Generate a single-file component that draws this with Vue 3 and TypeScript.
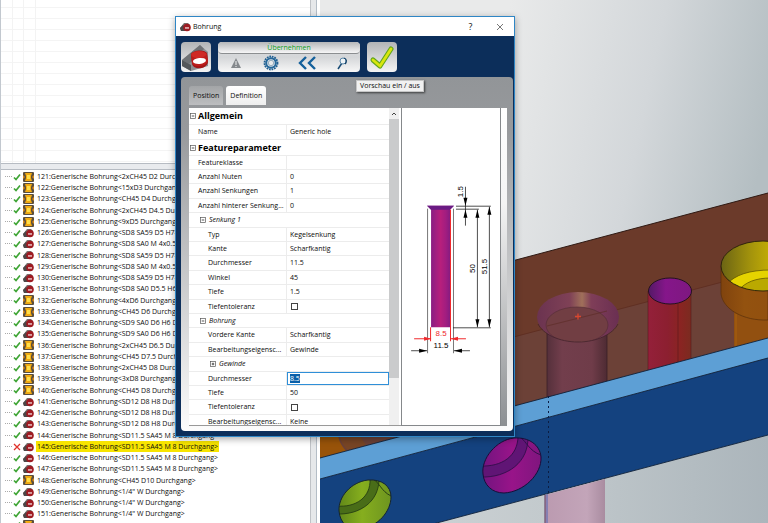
<script setup lang="ts">
import { onMounted, ref } from 'vue'

type FeatureKind = 'pocket' | 'drill'
interface FeatureNode { id: number; spec: string; kind: FeatureKind; failed?: boolean }
interface PropertyRow {
  label: string
  value?: string
  level: number
  style: 'section' | 'group' | 'text' | 'check' | 'edit'
  open?: boolean
}

const node = (id: number, kind: FeatureKind, spec: string, failed = false): FeatureNode => ({ id, kind, spec, failed })

const features: FeatureNode[] = [
  node(121, 'pocket', '2xCH45 D2 Durchgang'),
  node(122, 'pocket', '15xD3 Durchgang'),
  node(123, 'pocket', 'CH45 D4 Durchgang'),
  node(124, 'pocket', '2xCH45 D4.5 Durchgang'),
  node(125, 'pocket', '9xD5 Durchgang'),
  node(126, 'drill', 'SD8 SA59 D5 H7'),
  node(127, 'drill', 'SD8 SA0 M 4x0.5'),
  node(128, 'drill', 'SD8 SA59 D5 H7'),
  node(129, 'drill', 'SD8 SA0 M 4x0.5'),
  node(130, 'drill', 'SD8 SA59 D5 H7'),
  node(131, 'drill', 'SD8 SA0 D5.5 H6'),
  node(132, 'pocket', '4xD6 Durchgang'),
  node(133, 'pocket', 'CH45 D6 Durchgang'),
  node(134, 'drill', 'SD9 SA0 D6 H6 D'),
  node(135, 'drill', 'SD9 SA0 D6 H6 D'),
  node(136, 'pocket', '2xCH45 D6.5 Durchgang'),
  node(137, 'pocket', 'CH45 D7.5 Durchgang'),
  node(138, 'pocket', '2xCH45 D8 Durchgang'),
  node(139, 'pocket', '3xD8 Durchgang'),
  node(140, 'pocket', 'CH45 D8 Durchgang'),
  node(141, 'drill', 'SD12 D8 H8 Durchgang'),
  node(142, 'drill', 'SD12 D8 H8 Durchgang'),
  node(143, 'drill', 'SD12 D8 H8 Durchgang'),
  node(144, 'drill', 'SD11.5 SA45 M 8 Durchgang'),
  node(145, 'drill', 'SD11.5 SA45 M 8 Durchgang', true),
  node(146, 'drill', 'SD11.5 SA45 M 8 Durchgang'),
  node(147, 'drill', 'SD11.5 SA45 M 8 Durchgang'),
  node(148, 'pocket', 'CH45 D10 Durchgang'),
  node(149, 'drill', '1/4" W Durchgang'),
  node(150, 'drill', '1/4" W Durchgang'),
  node(151, 'drill', '1/4" W Durchgang'),
  node(152, 'pocket', 'CH45 D10 Durchgang'),
]

const properties: PropertyRow[] = [
  { label: 'Allgemein', level: 0, style: 'section', open: true },
  { label: 'Name', value: 'Generic hole', level: 1, style: 'text' },
  { label: 'Featureparameter', level: 0, style: 'section', open: true },
  { label: 'Featureklasse', value: '', level: 1, style: 'text' },
  { label: 'Anzahl Nuten', value: '0', level: 1, style: 'text' },
  { label: 'Anzahl Senkungen', value: '1', level: 1, style: 'text' },
  { label: 'Anzahl hinterer Senkung...', value: '0', level: 1, style: 'text' },
  { label: 'Senkung 1', level: 1, style: 'group', open: true },
  { label: 'Typ', value: 'Kegelsenkung', level: 2, style: 'text' },
  { label: 'Kante', value: 'Scharfkantig', level: 2, style: 'text' },
  { label: 'Durchmesser', value: '11.5', level: 2, style: 'text' },
  { label: 'Winkel', value: '45', level: 2, style: 'text' },
  { label: 'Tiefe', value: '1.5', level: 2, style: 'text' },
  { label: 'Tiefentoleranz', level: 2, style: 'check' },
  { label: 'Bohrung', level: 1, style: 'group', open: true },
  { label: 'Vordere Kante', value: 'Scharfkantig', level: 2, style: 'text' },
  { label: 'Bearbeitungseigensc...', value: 'Gewinde', level: 2, style: 'text' },
  { label: 'Gewinde', level: 2, style: 'group', open: false },
  { label: 'Durchmesser', value: '8.5', level: 2, style: 'edit' },
  { label: 'Tiefe', value: '50', level: 2, style: 'text' },
  { label: 'Tiefentoleranz', level: 2, style: 'check' },
  { label: 'Bearbeitungseigensc...', value: 'Keine', level: 2, style: 'text' },
]

const diameter = ref('8.5')

onMounted(() => {
  const field = document.querySelector<HTMLInputElement>('.edit-field')
  field?.focus({ preventScroll: true })
  field?.select()
})
</script>

<template>
  <main class="workspace">
    <svg class="defs" aria-hidden="true">
      <symbol id="ico-drill" viewBox="0 0 30 30">
        <path d="M1 18L19 3l8 7v14L10 29l-9-5z" fill="#8d9093" />
        <path d="M1 18L19 3l4 4L8 22z" fill="#6f7275" />
        <path d="M1 18l9 5v6l-9-5z" fill="#54575a" />
        <path d="M10 12c2-4 13-5 16-1l1 9c-1 7-14 9-16 2z" fill="#a31516" />
        <ellipse cx="18" cy="13" rx="8" ry="4" fill="#cf2a25" />
        <path d="M10 13l1 8c2 5 14 4 16-2l-1-7c-3 5-13 6-16 1z" fill="#bb1d1b" />
        <ellipse cx="18.500" cy="19" rx="6.500" ry="3" fill="#fff" transform="rotate(-6 18 19)" />
      </symbol>
      <symbol id="ico-drill-small" viewBox="0 0 11 10">
        <path d="M0 6l4-5h4l2 2v5L7 9H1z" fill="#77716f" />
        <path d="M0 6l3-3 2 2v4H1z" fill="#4c4747" />
        <ellipse cx="7" cy="5.500" rx="3.800" ry="3.800" fill="#9e1b22" />
        <path d="M5 5.300h4v1.300H5z" fill="#f3dcdc" />
      </symbol>
      <symbol id="ico-pocket" viewBox="0 0 11 10">
        <rect width="11" height="10" rx="1" fill="#5c4f3c" />
        <path d="M2 1h7L8 4v2l1 3H2l1-3V4z" fill="#f2ab12" />
        <path d="M4 3h3v4H4z" fill="#ffdf4a" />
        <path d="M0 3l2 2-2 2zM11 3L9 5l2 2z" fill="#d98a1c" />
      </symbol>
    </svg>

    <section class="side">
      <div class="sketch"></div>
      <div class="splitter"></div>
      <ul class="tree">
        <li v-for="f in features" :key="f.id" :class="{ failed: f.failed }">
          <i class="branch"></i>
          <svg class="state" viewBox="0 0 8 8">
            <path v-if="f.failed" d="M1 1l6 6M7 1L1 7" stroke="#e0322c" stroke-width="1.300" fill="none" />
            <path v-else d="M1 4.500l2 2L7 1.500" stroke="#3fa535" stroke-width="1.700" fill="none" />
          </svg>
          <svg class="kind"><use :href="f.kind === 'drill' ? '#ico-drill-small' : '#ico-pocket'" /></svg>
          <span class="caption">{{ f.id }}:Generische Bohrung&lt;{{ f.spec }}&gt;</span>
        </li>
      </ul>
    </section>
    <div class="v-splitter"></div>

    <svg class="scene" viewBox="320 0 448 523" preserveAspectRatio="xMinYMin slice" role="img" aria-label="3D-Ansicht">
      <defs>
        <linearGradient id="sky" x1="0.4" y1="0.1" x2="1" y2="0.250">
          <stop offset="0" stop-color="#e9eaea" /><stop offset="0.550" stop-color="#d3d7da" /><stop offset="1" stop-color="#b4bec2" />
        </linearGradient>
        <linearGradient id="floor" x1="0" x2="1"><stop offset="0" stop-color="#d3d7d9" /><stop offset="0.500" stop-color="#c3cacd" /><stop offset="1" stop-color="#abb5bb" /></linearGradient>
        <linearGradient id="cone" x1="0" x2="1">
          <stop offset="0" stop-color="#6b3350" /><stop offset="0.400" stop-color="#7f4156" /><stop offset="0.550" stop-color="#a0705a" /><stop offset="0.660" stop-color="#7f3e58" /><stop offset="1" stop-color="#6a2f52" />
        </linearGradient>
        <linearGradient id="shaft" x1="0" x2="1">
          <stop offset="0" stop-color="#55303b" /><stop offset="0.250" stop-color="#723e4c" /><stop offset="0.750" stop-color="#6f3c49" /><stop offset="1" stop-color="#4e2b33" />
        </linearGradient>
        <linearGradient id="pinkShaft" x1="0" x2="1"><stop offset="0" stop-color="#bb9ab0" /><stop offset="0.700" stop-color="#c3a5b9" /><stop offset="1" stop-color="#a98ca0" /></linearGradient>
        <linearGradient id="redShaft" x1="0" x2="1"><stop offset="0" stop-color="#94203a" /><stop offset="0.450" stop-color="#8c1f30" /><stop offset="0.750" stop-color="#8a2422" /><stop offset="1" stop-color="#7b2b20" /></linearGradient>
        <linearGradient id="violet" x1="0" x2="1"><stop offset="0" stop-color="#541966" /><stop offset="0.400" stop-color="#85168a" /><stop offset="1" stop-color="#7e1880" /></linearGradient>
        <linearGradient id="gold" x1="0" x2="1"><stop offset="0" stop-color="#6b6414" /><stop offset="0.350" stop-color="#a3930c" /><stop offset="0.600" stop-color="#c4ae05" /><stop offset="1" stop-color="#cdb500" /></linearGradient>
        <linearGradient id="rust" x1="0" x2="1"><stop offset="0" stop-color="#80430e" /><stop offset="0.500" stop-color="#93520f" /><stop offset="1" stop-color="#92500f" /></linearGradient>
        <linearGradient id="magenta" x1="0" x2="1"><stop offset="0" stop-color="#6f147e" /><stop offset="0.500" stop-color="#981489" /><stop offset="1" stop-color="#7d167d" /></linearGradient>
        <linearGradient id="lime" x1="0" x2="1"><stop offset="0" stop-color="#5d8418" /><stop offset="0.450" stop-color="#86ae1e" /><stop offset="1" stop-color="#6b9220" /></linearGradient>
        <clipPath id="coneClip"><ellipse cx="578" cy="317" rx="41" ry="25" /></clipPath>
        <clipPath id="bowlClip"><ellipse cx="763" cy="266" rx="42" ry="25" /></clipPath>
        <clipPath id="violetClip"><path d="M483 474c-2-15 13-34 31-36 15-1 26 7 27 19 1 17-17 35-37 36-12 0-20-8-21-19z" /></clipPath>
        <clipPath id="limeClip"><path d="M339 511c-1-14 12-29 29-31 14-1 23 6 23 17 0 14-13 30-31 32-12 1-20-6-21-18z" /></clipPath>
      </defs>
      <rect x="320" y="0" width="448" height="523" fill="url(#sky)" />
      <path d="M320 523h448v-90L320 555z" fill="url(#floor)" />
      <path d="M320 312L768 193v146L320 458z" fill="#6b3a2a" />
      <path d="M320 388L768 270v69L320 458z" fill="#6c4137" />
      <path d="M320 388L768 270" stroke="#5d2c20" stroke-width="0.800" />
      <path d="M320 312L768 193" stroke="#2f1a14" />
      <path d="M320 425h24l-6 10c1 8 5 12 8 16l-26 7z" fill="#985309" />
      <path d="M340 425c-3 10 2 20 8 25l18-5-14-20z" fill="#784525" />

      <path d="M547 325v75l60-16v-59z" fill="url(#shaft)" />
      <path d="M547 325v73M607 325v57" stroke="#3a2026" stroke-width="0.800" />
      <ellipse cx="578" cy="317" rx="41" ry="25" fill="url(#cone)" />
      <g clip-path="url(#coneClip)">
        <ellipse cx="577" cy="325" rx="31" ry="18" fill="#713e43" stroke="#542d37" stroke-width="0.600" />
        <path d="M547 326L607 311" stroke="#5d2c28" stroke-width="0.700" />
      </g>
      <path d="M538 324c5 10 21 18 40 18s35-8 40-18" fill="none" stroke="#42232b" stroke-width="0.800" />
      <path d="M575 316.500h6M578 313.500v6" stroke="#d9472f" stroke-width="1.300" />

      <path d="M648 291v87l43-11v-76z" fill="url(#redShaft)" />
      <path d="M648 291v80M691 291v69M678 304v58" stroke="#4d171b" stroke-width="0.500" />
      <ellipse cx="670" cy="291" rx="21.500" ry="13" fill="url(#violet)" stroke="#24121f" />

      <path d="M734 310v40l34-9v-31z" fill="#925010" />
      <path d="M736 314v34" stroke="#a9600c" />
      <path d="M721 266v28c2 15 22 27 47 26v-54z" fill="url(#rust)" stroke="#592f0a" stroke-width="0.700" />
      <ellipse cx="763" cy="266" rx="42" ry="25" fill="url(#gold)" />
      <g clip-path="url(#bowlClip)">
        <path d="M727 284c8-9 22-14 44-14v26h-38z" fill="#e5d300" stroke="#665b00" stroke-width="0.800" />
        <path d="M738 291c7-9 18-13 33-13v18h-30z" fill="#baa900" stroke="#665b00" stroke-width="0.800" />
      </g>
      <ellipse cx="763" cy="266" rx="42" ry="25" fill="none" stroke="#30240c" />

      <path d="M320 458L768 338v20L320 479z" fill="#5d9fd5" />
      <path d="M320 479L768 358v77L320 554z" fill="#14427f" />
      <path d="M320 458L768 338M320 479L768 358M320 554L768 435" fill="none" stroke="#10213a" stroke-width="0.900" />
      <path d="M545 495l60-16v44h-60z" fill="url(#pinkShaft)" />
      <path d="M545 495v28" stroke="#563359" /><path d="M547 494v29" stroke="#5065b4" />
      <path d="M548.500 396v98" stroke="#0b1d42" stroke-dasharray="2 3" />

      <g clip-path="url(#violetClip)">
        <rect x="480" y="435" width="64" height="60" fill="url(#magenta)" />
        <path d="M480 466c22 1 38-10 38-30l10 0c1 26-20 42-48 41z" fill="#601575" stroke="#310f4b" stroke-width="0.900" />
        <path d="M521 438c5 3 8 13 20 17" fill="none" stroke="#310f4b" />
      </g>
      <path d="M483 474c-2-15 13-34 31-36 15-1 26 7 27 19 1 17-17 35-37 36-12 0-20-8-21-19z" fill="none" stroke="#180e39" />
      <g clip-path="url(#limeClip)">
        <rect x="336" y="478" width="58" height="50" fill="url(#lime)" />
        <path d="M336 506c20 2 35-9 34-27l9 0c0 22-18 36-43 35z" fill="#496d18" stroke="#273f13" stroke-width="0.900" />
        <path d="M374 480c5 2 7 11 17 16" fill="none" stroke="#273f13" />
      </g>
      <path d="M339 511c-1-14 12-29 29-31 14-1 23 6 23 17 0 14-13 30-31 32-12 1-20-6-21-18z" fill="none" stroke="#152431" />
    </svg>

    <section class="dialog" role="dialog" aria-label="Bohrung">
      <header class="titlebar">
        <svg class="title-icon"><use href="#ico-drill-small" /></svg>
        <h1>Bohrung</h1>
        <button class="sys" type="button" aria-label="Hilfe">?</button>
        <button class="sys" type="button" aria-label="Schließen">
          <svg viewBox="0 0 8 8"><path d="M1 1l6 6M7 1L1 7" stroke="#555" stroke-width="0.800" /></svg>
        </button>
      </header>

      <div class="toolbar">
        <button class="tile" type="button" aria-label="Feature"><svg><use href="#ico-drill" /></svg></button>
        <div class="actions">
          <button class="apply" type="button">Übernehmen</button>
          <div class="tools">
            <button type="button" aria-label="Warnung">
              <svg viewBox="0 0 16 16"><path d="M8 3l5 10H3z" fill="#85898d" /><path d="M8 6v4M8 11v1" stroke="#dfe1e2" stroke-width="1.200" /></svg>
            </button>
            <button type="button" aria-label="Einstellungen">
              <svg viewBox="0 0 16 16"><circle cx="8" cy="8" r="6.500" fill="none" stroke="#205f91" stroke-width="1.800" stroke-dasharray="1.700 0.860" /><circle cx="8" cy="8" r="4.800" fill="#dce5ec" stroke="#26689a" stroke-width="2" /><circle cx="8" cy="8" r="2.700" fill="#e8eaeb" stroke="#7795ab" stroke-width="0.700" /></svg>
            </button>
            <button type="button" aria-label="Zurück">
              <svg class="wide" viewBox="0 0 20 16"><path d="M9 2L3 8l6 6M18 2l-6 6 6 6" fill="none" stroke="#14609b" stroke-width="2.400" /></svg>
            </button>
            <button type="button" aria-label="Vorschau">
              <svg viewBox="0 0 16 16"><path d="M8 8l-4 6" stroke="#174a74" stroke-width="1.500" /><circle cx="9" cy="6" r="3" fill="#eef3f6" stroke="#5a87a8" /><path d="M10 3c3 1 3 4 1 6" fill="none" stroke="#123f66" stroke-width="1.200" /></svg>
            </button>
          </div>
        </div>
        <button class="tile" type="button" aria-label="OK">
          <svg viewBox="0 0 30 30"><path d="M6 18l7 6L24 7" fill="none" stroke="#62a51c" stroke-width="5" stroke-linecap="round" stroke-linejoin="round" /><path d="M6 18l7 6L24 7" fill="none" stroke="#d9e60d" stroke-width="2.800" stroke-linecap="round" stroke-linejoin="round" /></svg>
        </button>
      </div>
      <div class="tooltip" role="tooltip">Vorschau ein / aus</div>

      <div class="panel">
        <nav class="tabs">
          <button type="button">Position</button>
          <button type="button" class="active">Definition</button>
        </nav>
        <div class="content">
          <div class="grid-box">
            <table class="props">
              <colgroup><col class="col-name" /><col /></colgroup>
              <tbody>
                <tr v-for="(p, i) in properties" :key="i" :class="[p.style, 'level-' + p.level]">
                  <td v-if="p.style === 'section' || p.style === 'group'" colspan="2">
                    <button type="button" class="fold" :aria-expanded="p.open">
                      <svg viewBox="0 0 7 7"><rect x="0.500" y="0.500" width="6" height="6" fill="#fff" stroke="#555" stroke-width="0.800" /><path :d="p.open ? 'M2 3.500h3' : 'M2 3.500h3M3.500 2v3'" stroke="#222" stroke-width="0.900" /></svg>
                      {{ p.label }}
                    </button>
                  </td>
                  <template v-else>
                    <td class="name"><label :for="'prop-' + i">{{ p.label }}</label></td>
                    <td class="value">
                      <input v-if="p.style === 'check'" :id="'prop-' + i" type="checkbox" />
                      <input v-else-if="p.style === 'edit'" :id="'prop-' + i" v-model="diameter" class="edit-field" type="text" />
                      <output v-else :id="'prop-' + i">{{ p.value }}</output>
                    </td>
                  </template>
                </tr>
              </tbody>
            </table>
            <div class="scrollbar">
              <svg viewBox="0 0 10 11"><path d="M3 7l2-2 2 2" fill="none" stroke="#444" /></svg>
              <div class="thumb"></div>
            </div>
          </div>
          <div class="preview">
            <svg viewBox="402 108 98 318" role="img" aria-label="Bohrung Maße">
              <defs>
                <linearGradient id="bore" x1="0" x2="1"><stop offset="0" stop-color="#751d84" /><stop offset="0.350" stop-color="#a41f80" /><stop offset="0.500" stop-color="#b71f7c" /><stop offset="0.700" stop-color="#a11d80" /><stop offset="1" stop-color="#6d1981" /></linearGradient>
              </defs>
              <path d="M427.500 209v145M453.500 209v145" stroke="#777" />
              <path d="M427 206h27l-4 4v118h-19V210z" fill="url(#bore)" />
              <path d="M427 206h27l-4 4h-19z" fill="#6a1b83" />
              <path d="M450.500 210v132M430.500 328v14M414 339.500h17M451 339.500h15" stroke="#f0292c" fill="none" />
              <path d="M431 339.500l-7-2v4zM451 339.500l7-2v4z" fill="#f0292c" />
              <path d="M456 206.500h35M456 209.500h23M453 328.500h38M465.500 187v39M477.500 210v118M489.500 207v121M411 351.500h16M454 351.500h16" fill="none" stroke="#222" stroke-width="0.800" />
              <path d="M465.500 206l-2-8h4zM465.500 210l-2 8h4zM477.500 210l-2 8h4zM477.500 328l-2-8h4zM489.500 207l-2 8h4zM489.500 328l-2-8h4zM427 351.500l-8-2v4zM454 351.500l8-2v4z" fill="#000" />
              <text x="441" y="337" fill="#f0292c">8.5</text>
              <text x="441" y="349">11.5</text>
              <text transform="translate(463 192) rotate(-90)">1.5</text>
              <text transform="translate(475 269) rotate(-90)">50</text>
              <text transform="translate(487 267) rotate(-90)">51.5</text>
            </svg>
          </div>
          <div class="rail"></div>
        </div>
      </div>
    </section>
  </main>
</template>

<style>
body { margin: 0; overflow: hidden; }
</style>

<style scoped>
* { box-sizing: border-box; }
.workspace {
  position: relative;
  display: flex;
  height: 100vh;
  overflow: hidden;
  background: #fff;
  color: #0c0c0c;
  font: 7px/11px "Open Sans", "Noto Sans", sans-serif;
}
button, input { margin: 0; padding: 0; border: 0; background: none; font: inherit; color: inherit; }
svg { display: block; }
.defs { position: absolute; width: 0; height: 0; }

.side {
  flex: 0 0 310px;
  display: flex;
  flex-direction: column;
  min-width: 0;
  border-left: 1px solid #c2c8cf;
}
.sketch {
  flex: 0 0 163px;
  background:
    linear-gradient(90deg, transparent 11px, #f3f3f3 11px 12px, transparent 12px 22px, #f3f3f3 22px 23px, transparent 23px 34px, #f3f3f3 34px 35px, transparent 35px),
    linear-gradient(#f4f4f4 1px, transparent 1px) 0 7px / 100% 11px,
    #fff;
}
.splitter { flex: 0 0 7px; background: #e9ebee; border: solid #b7bcc3; border-width: 1px 0; }
.tree { flex: 1; min-height: 0; margin: 0; padding: 1px 0 0 4px; list-style: none; overflow: hidden; white-space: nowrap; }
.tree li { display: flex; align-items: center; height: 11px; }
.tree li:nth-child(4n) { height: 12px; }
.branch { width: 7px; border-top: 1px dotted #aaa; }
.state { width: 8px; height: 8px; margin: 0 2px 0 1px; }
.kind { width: 11px; height: 10px; }
.caption { margin-left: 2px; padding: 0 1px; }
.failed .caption { background: #f7e400; }
.v-splitter { flex: 0 0 10px; background: linear-gradient(90deg, #bfc2c6 1px, #e6e8ea 1px 6px, #b4bdc6 6px 7px, #fff 7px); }
.scene { flex: 1; min-width: 0; width: 0; height: 100%; }

.dialog {
  position: absolute;
  left: 175px;
  top: 16px;
  width: 340px;
  display: flex;
  flex-direction: column;
  padding: 0 1px 5px 5px;
  background: #0c2e5a;
  border: 1px solid #2f86c5;
  box-shadow: 0 2px 7px rgba(0, 0, 0, 0.35);
}
.titlebar {
  display: flex;
  align-items: center;
  height: 19px;
  margin: 0 -1px 0 -5px;
  padding-left: 4px;
  background: #fff;
}
.title-icon { width: 11px; height: 10px; }
h1 { flex: 1; margin: 0 0 0 2px; font: 7px/12px "Open Sans", sans-serif; }
.sys { width: 29px; height: 19px; font-size: 9px; display: grid; place-items: center; }
.sys svg { width: 8px; height: 8px; }
.toolbar { display: flex; gap: 7px; padding: 6px 0 5px; }
.tile { width: 30px; height: 30px; border-radius: 4px; background: linear-gradient(#b2b4b6, #f4f4f4); overflow: hidden; }
.tile svg { width: 30px; height: 30px; }
.actions { width: 142px; height: 30px; border-radius: 4px; background: linear-gradient(#dfe0e1, #d4d6d8 50%, #f7f7f7); overflow: hidden; }
.apply {
  display: block;
  width: 100%;
  height: 12px;
  border-radius: 4px;
  border-bottom: 1px solid #8b8e90;
  background: linear-gradient(#b5b7b9, #f6f6f6);
  color: #0f9f18;
  line-height: 11px;
}
.tools { display: grid; grid-template-columns: repeat(4, 1fr); height: 18px; align-items: center; justify-items: center; }
.tools svg { width: 16px; height: 16px; }
.tools .wide { width: 20px; }
.tooltip {
  position: absolute;
  left: 180px;
  top: 63px;
  height: 12px;
  padding: 0 3px;
  background: #f1f1f1;
  border: 1px solid #c6c6c6;
  box-shadow: 1px 1px 2px rgba(0, 0, 0, 0.6);
  line-height: 10px;
}
.panel {
  padding: 9px 6px 5px 8px;
  border-radius: 4px;
  background: linear-gradient(#929598, #97999c 15%, #fcfcfc);
}
.tabs { display: flex; gap: 3px; margin-bottom: 3px; }
.tabs button { height: 19px; padding: 0 4px; border-radius: 3px 3px 0 0; background: linear-gradient(#a3a5a7, #bdbec0); }
.tabs .active { background: linear-gradient(#fff, #eee); }
.content { display: flex; height: 318px; }
.grid-box { flex: 1; min-width: 0; display: flex; overflow: hidden; background: #fff; border-bottom: 1px solid #999; }
.props { flex: 1; min-width: 0; table-layout: fixed; border-collapse: separate; border-spacing: 0; align-self: flex-start; }
.col-name { width: 98px; }
td { height: 14px; padding: 0; border-bottom: 1px solid #ececec; white-space: nowrap; line-height: 12px; }
tr:nth-child(2) td, tr:nth-child(5n + 6) td, tr:nth-child(5n + 8) td { height: 15px; }
.section td { height: 16px; font-weight: 700; font-size: 9px; color: #000; }
.section:first-child td { height: 17px; }
.name { padding-left: 9px; border-right: 1px solid #ececec; }
.level-2 .name { padding-left: 19px; }
.value { padding-left: 3px; }
.fold { display: flex; align-items: center; gap: 2px; padding-left: 1px; line-height: 12px; }
.fold svg { width: 6px; height: 6px; }
.group .fold { font-style: italic; gap: 3px; padding-left: 11px; }
.group.level-2 .fold { padding-left: 21px; }
input[type="checkbox"] { display: block; appearance: none; width: 7px; height: 7px; margin-left: 1px; border: 1px solid #444; background: #fff; }
tr.edit .value { padding: 0; }
.edit-field { display: block; width: 100%; height: 13px; padding-left: 2px; border: 1px solid #2f8fd8; outline: 0; background: #fff; }
.edit-field::selection { background: #0a5fa8; color: #fff; }
.scrollbar { flex: 0 0 12px; background: #f0f0f0; border-right: 2px solid #fff; }
.scrollbar svg { width: 10px; height: 11px; }
.thumb { height: 259px; background: #cacbcc; }
.preview { flex: 0 0 99px; border: solid #85888b; border-width: 0 1px 1px; background: #fff; }
.preview svg { width: 98px; height: 317px; }
.preview text { font: 8px "Liberation Sans", sans-serif; text-anchor: middle; }
.rail { flex: 0 0 6px; background: linear-gradient(#fff, #f4f4f4 30%, #8c8f92); }
</style>
